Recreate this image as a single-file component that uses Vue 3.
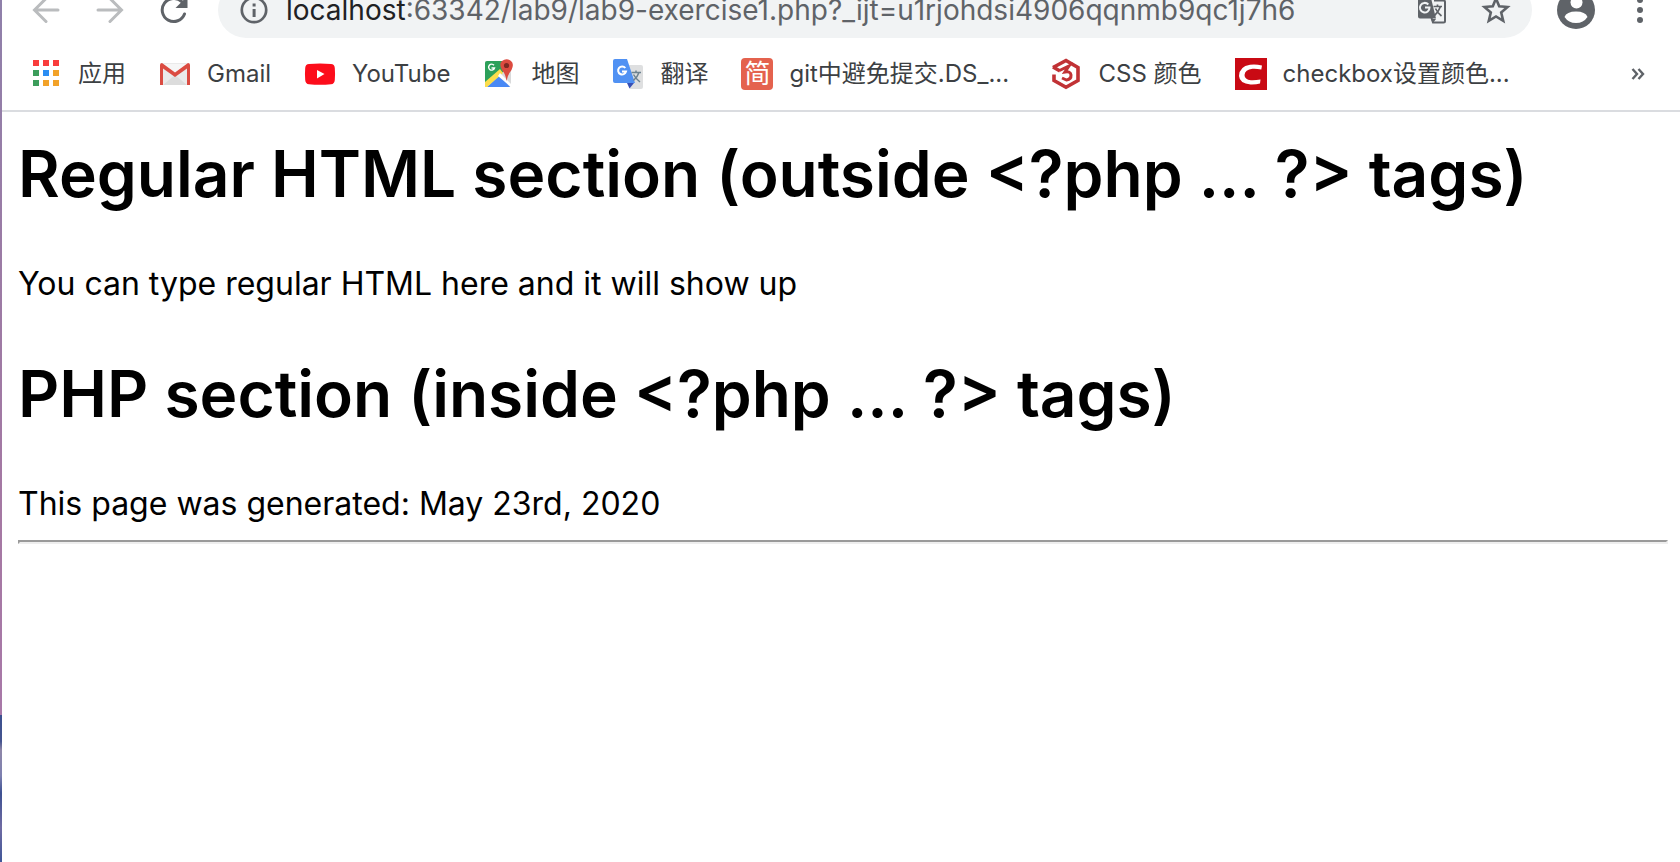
<script setup>
import { ref } from 'vue'

const host = 'localhost'
const path = ref(':63342/lab9/lab9-exercise1.php?_ijt=u1rjohdsi4906qqnmb9qc1j7h6')

const bookmarks = [
  { id: 'apps', label: '应用' },
  { id: 'gmail', label: 'Gmail' },
  { id: 'youtube', label: 'YouTube' },
  { id: 'maps', label: '地图' },
  { id: 'translate', label: '翻译' },
  { id: 'jianshu', label: 'git中避免提交.DS_...' },
  { id: 'css', label: 'CSS 颜色' },
  { id: 'csdn', label: 'checkbox设置颜色...' },
]

const sections = [
  {
    title: 'Regular HTML section (outside <?php ... ?> tags)',
    text: 'You can type regular HTML here and it will show up',
  },
  {
    title: 'PHP section (inside <?php ... ?> tags)',
    text: 'This page was generated: May 23rd, 2020',
  },
]

const appColors = ['#f93c3c', '#f93c3c', '#f93c3c', '#3c9d5b', '#2b8df3', '#f2a229', '#3c9d5b', '#f2a229', '#f2a229']
</script>

<template>
  <div class="window">
    <header class="chrome">
      <div class="toolbar">
        <button class="tool" type="button" aria-label="Back">
          <svg width="32" height="32" viewBox="0 0 32 32" fill="none" stroke="#babcbe" stroke-width="3" stroke-linecap="round">
            <path d="M28 16H5M16 4.500L4.500 16L16 27.500" />
          </svg>
        </button>
        <button class="tool" type="button" aria-label="Forward">
          <svg width="32" height="32" viewBox="0 0 32 32" fill="none" stroke="#babcbe" stroke-width="3" stroke-linecap="round">
            <path d="M4 16H27M16 4.500L27.500 16L16 27.500" />
          </svg>
        </button>
        <button class="tool" type="button" aria-label="Reload">
          <svg width="32" height="32" viewBox="0 0 32 32">
            <path d="M26.500 20A11.500 11.500 0 1 1 23.800 7.800" fill="none" stroke="#5f6368" stroke-width="3" stroke-linecap="round" />
            <path d="M29.500 2V14H17.500Z" fill="#5f6368" />
          </svg>
        </button>
        <div class="address">
          <button class="inner" type="button" aria-label="Site information">
            <svg width="32" height="32" viewBox="0 0 32 32">
              <circle cx="16" cy="16" r="12.200" fill="none" stroke="#5f6368" stroke-width="2.700" />
              <path d="M14.600 9.500h3v3h-3zM14.600 15h3v8h-3z" fill="#5f6368" />
            </svg>
          </button>
          <label class="host" for="url">{{ host }}</label>
          <input id="url" v-model="path" class="url" type="text" spellcheck="false" />
          <button class="inner" type="button" aria-label="Translate this page">
            <svg width="32" height="32" viewBox="0 0 32 32">
              <path d="M18 6.500H27.500Q29 6.500 29 8V27Q29 28.500 27.500 28.500H17L15.500 24" fill="none" stroke="#5f6368" stroke-width="2" />
              <path d="M4 2H14.500L20 24.500H4Q2 24.500 2 22.500V4Q2 2 4 2ZM15 25H20L17 29Z" fill="#5f6368" />
              <path d="M12.300 10.500A4.800 4.800 0 1 0 13.500 13.500H9" fill="none" stroke="#f1f3f4" stroke-width="2" />
              <path d="M17.500 12.500H26M21.500 10.500V12.500M24.500 12.500Q22.500 18 18.500 21.500M19.500 14.500Q21.500 19 25.500 22" fill="none" stroke="#5f6368" stroke-width="1.700" />
            </svg>
          </button>
          <button class="inner star" type="button" aria-label="Bookmark this page">
            <svg width="32" height="32" viewBox="0 0 32 32">
              <path d="M16 4.500L19.200 12.300L27.500 13L21.200 18.500L23.200 26.800L16 22.400L8.800 26.800L10.800 18.500L4.500 13L12.800 12.300Z" fill="none" stroke="#5f6368" stroke-width="2.600" />
            </svg>
          </button>
        </div>
        <button class="tool profile" type="button" aria-label="Profile">
          <svg width="40" height="40" viewBox="0 0 40 40">
            <circle cx="20" cy="20" r="19" fill="#5f6368" />
            <circle cx="20.500" cy="12.500" r="6" fill="#fff" />
            <path d="M8.500 27Q10.500 21.500 20 21.500T31.500 27Q27.500 33 20 33T8.500 27Z" fill="#fff" />
          </svg>
        </button>
        <button class="tool" type="button" aria-label="Menu">
          <svg width="32" height="32" viewBox="0 0 32 32" fill="#5f6368">
            <circle cx="16" cy="6" r="3" /><circle cx="16" cy="16" r="3" /><circle cx="16" cy="26" r="3" />
          </svg>
        </button>
      </div>

      <nav class="bookmarks" aria-label="Bookmarks">
        <a v-for="b in bookmarks" :key="b.id" class="bookmark" href="#">
          <svg v-if="b.id === 'apps'" width="32" height="32" viewBox="0 0 32 32" aria-hidden="true">
            <rect v-for="(c, i) in appColors" :key="i" :x="3 + (i % 3) * 10" :y="2 + Math.floor(i / 3) * 10" width="6" height="6" :fill="c" />
          </svg>
          <svg v-else-if="b.id === 'gmail'" width="32" height="32" viewBox="0 0 32 32" aria-hidden="true">
            <rect x="2" y="5" width="28" height="22" rx="1" fill="#eaeaea" />
            <path d="M4 27L16 17L28 27Z" fill="#dcdcdc" />
            <path d="M4 6H28L16 15Z" fill="#f6f6f6" />
            <path d="M1 7Q1 5 3 5L16 14.500L29 5Q31 5 31 7V27H28V10.500L16 19L4 10.500V27H1Z" fill="#db4c42" />
          </svg>
          <svg v-else-if="b.id === 'youtube'" width="32" height="32" viewBox="0 0 32 32" aria-hidden="true">
            <path d="M5 6Q16 5 27 6Q30.500 6.200 30.800 10Q31.300 16 30.800 22Q30.500 26 27 26.300Q16 27.300 5 26.300Q1.500 26 1.200 22Q.7 16 1.200 10Q1.500 6.200 5 6Z" fill="#fc0d1b" />
            <path d="M13 12L20.500 16L13 20.500Z" fill="#fff" />
          </svg>
          <svg v-else-if="b.id === 'maps'" width="32" height="32" viewBox="0 0 32 32" aria-hidden="true">
            <rect x="2" y="3" width="26" height="26" rx="2" fill="#d9dadb" />
            <path d="M4 3H22L21 13L2 29V5Q2 3 4 3Z" fill="#2ca05a" />
            <path d="M4 29L17 17L27 29Z" fill="#4989f5" />
            <path d="M2 24L17 11L20 15L4 29H2Z" fill="#fbdd4b" />
            <path d="M17 15L28 26V29L15 18Z" fill="#fff" />
            <path d="M11 7.300A3 3 0 1 0 11.500 10H8.500" fill="none" stroke="#fff" stroke-width="1.400" />
            <path d="M23.500 23Q23 17 19 12Q15.500 6 19 3Q23.500-.5 28 3Q31.500 6 28.500 12Q24.500 17 23.500 23Z" fill="#dc4b40" />
            <circle cx="23.500" cy="7.500" r="2.600" fill="#7d2922" />
          </svg>
          <svg v-else-if="b.id === 'translate'" width="32" height="32" viewBox="0 0 32 32" aria-hidden="true">
            <path d="M15 7H29Q31 7 31 9V29Q31 31 29 31H18Z" fill="#dedfe0" />
            <path d="M17 25H22L17.500 30.500L15 25Z" fill="#3850b5" />
            <path d="M3 1H15L23 25H3Q1 25 1 23V3Q1 1 3 1Z" fill="#5091f3" />
            <path d="M13.300 10A4 4 0 1 0 14 13.500H10" fill="none" stroke="#fff" stroke-width="2" />
            <path d="M19.500 14.500H29M24 12.500V14.500M27 14.500Q25.500 19 21.500 22.500M21.500 16.500Q24 21 28 24" fill="none" stroke="#6c8290" stroke-width="1.500" />
          </svg>
          <span v-else-if="b.id === 'jianshu'" class="seal" aria-hidden="true">简</span>
          <svg v-else-if="b.id === 'css'" width="32" height="32" viewBox="0 0 32 32" aria-hidden="true" fill="none" stroke="#c13235" stroke-width="3.600">
            <path d="M3 9.500L16 2.500L28 9.500V22.500L16 29.300L4 22.500V16.500" />
            <path d="M3 9L10 13" />
            <path d="M9.500 12.500L19 8L15 14Q20.500 13 21 17Q21.300 21.300 16.500 22L12 20" stroke-width="3" />
          </svg>
          <svg v-else width="32" height="32" viewBox="0 0 32 32" aria-hidden="true">
            <rect width="32" height="32" fill="#c90a14" />
            <path d="M27 7.500L26.300 11.500Q21 10.500 17.500 10.800Q10 11.500 9.500 17Q9.500 21.500 16 22.300Q20.500 22.500 25.500 21.500L25 25.500Q21 26.700 15.500 26.500Q4.500 25.500 4 18Q4.300 8.500 15 6.800Q20.500 6 27 7.500Z" fill="#fff" />
          </svg>
          <span :class="{ elided: b.label.endsWith('...') }">{{ b.label }}</span>
        </a>
        <button class="more" type="button" aria-label="More bookmarks">
          <svg width="16" height="16" viewBox="0 0 16 16" fill="none" stroke="#5f6368" stroke-width="2.400">
            <path d="M2.500 3L7 8L2.500 13M8.500 3L13 8L8.500 13" />
          </svg>
        </button>
      </nav>
    </header>

    <main class="page">
      <section v-for="s in sections" :key="s.title">
        <h1>{{ s.title }}</h1>
        <p>{{ s.text }}</p>
      </section>
      <hr />
    </main>
  </div>
</template>

<style>
body {
  margin: 0;
  background: #fff;
}
</style>

<style scoped>
.window {
  position: relative;
  box-sizing: border-box;
  min-height: 100vh;
  padding-left: 2px;
  overflow: hidden;
  background: #fff;
  font-family: Inter, "Noto Sans CJK SC", sans-serif;
}

/* Sliver of desktop wallpaper along the window's left edge */
.window::before {
  content: "";
  position: absolute;
  inset: 0 auto 0 0;
  width: 2px;
  background: linear-gradient(#8f80aa 0, #9b7ba5 30%, #a578a3 60%, #a878a8 83%, #3c508f 83%, #45548f 86%, #8e86a8 87%, #7d80b0 90%, #3e5192 92%, #6f6ba3 96%, #405698 100%);
}

button {
  padding: 0;
  border: 0;
  background: none;
}

svg {
  display: block;
  flex: none;
}

.chrome {
  border-bottom: 2px solid #dadce0;
}

.toolbar {
  display: flex;
  align-items: flex-end;
  height: 38px;
  padding: 0 24px 0 28px;
  overflow: hidden;
}

.tool {
  display: flex;
  align-items: center;
  justify-content: center;
  width: 32px;
  height: 56px;
  margin-right: 32px;
}

.address {
  display: flex;
  flex: 1;
  align-items: center;
  min-width: 0;
  box-sizing: border-box;
  height: 56px;
  margin-left: -4px;
  padding: 0 20px;
  border-radius: 28px;
  background: #f1f3f4;
  font-size: 28px;
  line-height: 34px;
}

.inner {
  flex: none;
}

.star {
  margin-left: 32px;
}

.host {
  margin-left: 16px;
  color: #202124;
}

.url {
  flex: 1;
  min-width: 0;
  padding: 0;
  border: 0;
  outline: 0;
  background: none;
  color: #5f6368;
  font: inherit;
}

.profile {
  width: 40px;
  margin: 0 28px 0 24px;
}

.profile + .tool {
  margin-right: 0;
}

.bookmarks {
  display: flex;
  align-items: center;
  gap: 33px;
  height: 72px;
  padding: 0 34px 0 28px;
}

.bookmark {
  display: flex;
  align-items: center;
  gap: 16px;
  color: #3c4043;
  font-size: 24px;
  line-height: 32px;
  text-decoration: none;
  white-space: nowrap;
}

.elided {
  min-width: 228px;
}

.seal {
  width: 32px;
  height: 32px;
  border-radius: 4px;
  background: #e4624e;
  color: #fff;
  font-size: 26px;
  text-align: center;
}

.more {
  margin-left: auto;
}

.page {
  padding: 16px 12px 0 16px;
  color: #000;
}

h1 {
  margin: 0;
  font-size: 64px;
  font-weight: 600;
  line-height: 92px;
  white-space: nowrap;
}

p {
  margin: 42px 0;
  font-size: 32px;
  line-height: 44px;
}

section:last-of-type p {
  margin-bottom: 0;
}

hr {
  height: 0;
  margin: 14px 0 0;
  border-style: solid;
  border-width: 2px;
  border-color: #9a9a9a #eeeeee #eeeeee #9a9a9a;
}
</style>
